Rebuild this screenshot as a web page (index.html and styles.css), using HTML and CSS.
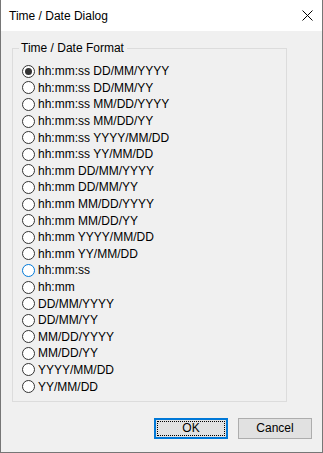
FILE: index.html
```html
<!DOCTYPE html>
<html lang="en">
<head>
    <meta charset="UTF-8">
    <title>Time / Date Dialog</title>
    <link rel="stylesheet" href="styles.css">
</head>
<body>
    <div class="window">
        <div class="titlebar">
            <span class="title">Time / Date Dialog</span>
            <span class="close">
                <svg width="11" height="11" viewBox="0 0 11 11">
                    <path d="M0.5 0.5 L10.5 10.5 M10.5 0.5 L0.5 10.5" stroke="#000" stroke-width="1" fill="none"/>
                </svg>
            </span>
        </div>

        <div class="content">
            <fieldset class="group">
                <legend>Time / Date Format</legend>
                <div class="options">
                    <label class="option"><span class="radio checked"></span>hh:mm:ss DD/MM/YYYY</label>
                    <label class="option"><span class="radio"></span>hh:mm:ss DD/MM/YY</label>
                    <label class="option"><span class="radio"></span>hh:mm:ss MM/DD/YYYY</label>
                    <label class="option"><span class="radio"></span>hh:mm:ss MM/DD/YY</label>
                    <label class="option"><span class="radio"></span>hh:mm:ss YYYY/MM/DD</label>
                    <label class="option"><span class="radio"></span>hh:mm:ss YY/MM/DD</label>
                    <label class="option"><span class="radio"></span>hh:mm DD/MM/YYYY</label>
                    <label class="option"><span class="radio"></span>hh:mm DD/MM/YY</label>
                    <label class="option"><span class="radio"></span>hh:mm MM/DD/YYYY</label>
                    <label class="option"><span class="radio"></span>hh:mm MM/DD/YY</label>
                    <label class="option"><span class="radio"></span>hh:mm YYYY/MM/DD</label>
                    <label class="option"><span class="radio"></span>hh:mm YY/MM/DD</label>
                    <label class="option"><span class="radio hover"></span>hh:mm:ss</label>
                    <label class="option"><span class="radio"></span>hh:mm</label>
                    <label class="option"><span class="radio"></span>DD/MM/YYYY</label>
                    <label class="option"><span class="radio"></span>DD/MM/YY</label>
                    <label class="option"><span class="radio"></span>MM/DD/YYYY</label>
                    <label class="option"><span class="radio"></span>MM/DD/YY</label>
                    <label class="option"><span class="radio"></span>YYYY/MM/DD</label>
                    <label class="option"><span class="radio"></span>YY/MM/DD</label>
                </div>
            </fieldset>

            <div class="buttons">
                <button class="btn default"><span class="focus">OK</span></button>
                <button class="btn">Cancel</button>
            </div>
        </div>
    </div>
</body>
</html>
```

FILE: styles.css
```css
body {
    margin: 0;
    font-family: "Liberation Sans", Arial, sans-serif;
    font-size: 12px;
    color: #000;
    background: #f0f0f0;
}
.window {
    width: 323px;
    height: 453px;
    box-sizing: border-box;
    border: 1px solid #767676;
    border-top: none;
    display: flex;
    flex-direction: column;
    background: #f0f0f0;
}
.titlebar {
    height: 31px;
    background: #fff;
    display: flex;
    align-items: center;
    justify-content: space-between;
    padding: 0 9px 0 8px;
    flex-shrink: 0;
}
.title {
    font-size: 12px;
    padding-top: 1px;
}
.close svg {
    display: block;
    margin-top: -1px;
}
.content {
    flex: 1;
    padding-top: 9px;
}
.group {
    margin: 0 0 0 11px;
    width: 275px;
    box-sizing: border-box;
    border: 1px solid #dcdcdc;
    padding: 7px 0 6px 9px;
}
.group legend {
    line-height: 16px;
    padding: 0 3px 0 2px;
    margin-left: -3px;
}
.options {
    display: flex;
    flex-direction: column;
}
.option {
    height: 16.6px;
    display: flex;
    align-items: center;
    white-space: nowrap;
}
.radio {
    width: 13px;
    height: 13px;
    box-sizing: border-box;
    border: 1px solid #333;
    border-radius: 50%;
    background: #fff;
    margin-right: 3px;
    flex-shrink: 0;
    display: flex;
    align-items: center;
    justify-content: center;
}
.radio.checked::after {
    content: "";
    width: 7px;
    height: 7px;
    border-radius: 50%;
    background: #333;
}
.radio.hover {
    border-color: #0078d7;
}
.buttons {
    display: flex;
    justify-content: flex-end;
    gap: 10px;
    margin-top: 16px;
    padding-right: 10px;
}
.btn {
    width: 74px;
    height: 21px;
    box-sizing: border-box;
    background: #e1e1e1;
    border: 1px solid #adadad;
    font-family: inherit;
    font-size: 12px;
    color: #000;
    padding: 0;
    display: flex;
    align-items: center;
    justify-content: center;
}
.btn.default {
    border: 2px solid #0078d7;
    padding: 1px;
}
.btn .focus {
    flex: 1;
    align-self: stretch;
    border: 1px dotted #000;
    display: flex;
    align-items: center;
    justify-content: center;
}
```
